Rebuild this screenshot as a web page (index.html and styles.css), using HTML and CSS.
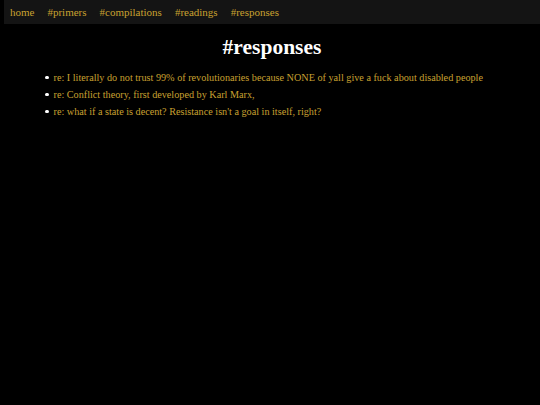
FILE: index.html
```html
<!DOCTYPE html>
<html>
<head>
<meta charset="utf-8">
<link rel="stylesheet" href="styles.css">
</head>
<body>
<nav class="nav">
  <a href="#">home</a>
  <a href="#">#primers</a>
  <a href="#">#compilations</a>
  <a href="#">#readings</a>
  <a href="#">#responses</a>
</nav>
<h1 class="title">#responses</h1>
<ul class="list">
  <li><a href="#">re: I literally do not trust 99% of revolutionaries because NONE of yall give a fuck about disabled people</a></li>
  <li><a href="#">re: Conflict theory, first developed by Karl Marx,</a></li>
  <li><a href="#">re: what if a state is decent? Resistance isn't a goal in itself, right?</a></li>
</ul>
</body>
</html>
```
FILE: styles.css
```css
html, body {
  background: #000;
}
body {
  margin: 0 0 0 4px;
  font-family: "Liberation Serif", serif;
  color: #eee;
}
.nav {
  background: #141414;
  height: 24px;
  display: flex;
  align-items: center;
  gap: 13px;
  padding-left: 6px;
  font-size: 11px;
}
.nav a, .list a {
  color: #c9a130;
  text-decoration: none;
}
.title {
  text-align: center;
  font-size: 21.5px;
  margin: 11px 0 9px;
  color: #fff;
}
.list {
  margin: 0;
  padding-left: 48px;
  font-size: 10.2px;
  list-style: none;
}
.list li {
  line-height: 17px;
  display: flex;
  align-items: center;
}
.list li::before {
  content: "";
  width: 3.5px;
  height: 3.5px;
  border-radius: 50%;
  background: #fff;
  margin: 0 5px 0 -7px;
  flex: none;
}
```
